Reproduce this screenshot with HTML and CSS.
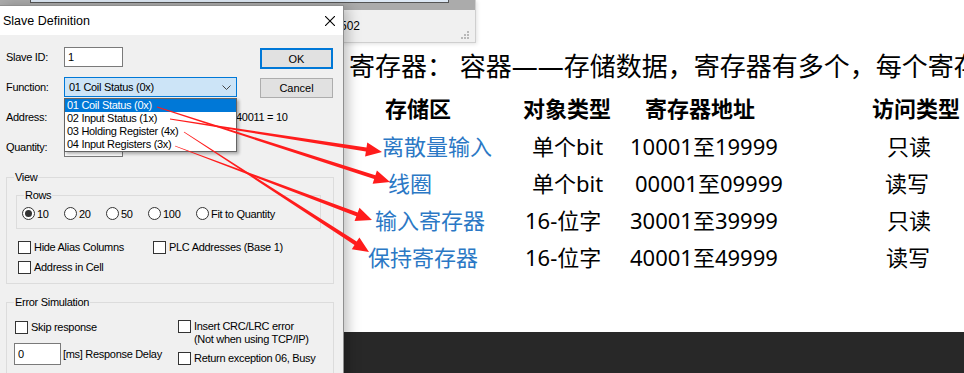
FILE: index.html
```html
<!DOCTYPE html>
<html>
    <head>
        <title>Slave Definition</title>
        <meta charset="utf-8" />
        <link rel="stylesheet" href="styles.css">
    </head>
    <body>
        <!-- window behind the dialog -->
        <div class="back-win">
            <div class="back-frame"><div class="back-client"></div></div>
            <div class="back-status">
                <span class="port">502</span>
                <svg class="grip" width="9" height="9" viewBox="0 0 9 9">
                    <rect x="7" y="1" width="2" height="2" />
                    <rect x="4" y="4" width="2" height="2" />
                    <rect x="7" y="4" width="2" height="2" />
                    <rect x="1" y="7" width="2" height="2" />
                    <rect x="4" y="7" width="2" height="2" />
                    <rect x="7" y="7" width="2" height="2" />
                </svg>
            </div>
        </div>

        <div class="dialog">
            <div class="titlebar">
                <span>Slave Definition</span>
                <svg width="10" height="10" viewBox="0 0 10 10">
                    <path d="M0 0 L10 10 M10 0 L0 10" stroke="#000" stroke-width="1.1" fill="none" />
                </svg>
            </div>
            <div class="dlg-body">
                <div class="top">
                    <div class="fields">
                        <div class="field"><label>Slave ID:</label><div class="edit">1</div></div>
                        <div class="field">
                            <label>Function:</label>
                            <div class="combo">
                                <span>01 Coil Status (0x)</span>
                                <svg width="9" height="5" viewBox="0 0 9 5">
                                    <path d="M0.5 0.5 L4.5 4.5 L8.5 0.5" stroke="#444" fill="none" />
                                </svg>
                            </div>
                        </div>
                        <div class="field"><label>Address:</label><div class="edit">0</div><span class="hint">40011 = 10</span></div>
                        <div class="field"><label>Quantity:</label><div class="edit">10</div></div>
                        <ul class="droplist">
                            <li class="sel">01 Coil Status (0x)</li>
                            <li>02 Input Status (1x)</li>
                            <li>03 Holding Register (4x)</li>
                            <li>04 Input Registers (3x)</li>
                        </ul>
                    </div>
                    <div class="buttons">
                        <button class="btn default">OK</button>
                        <button class="btn">Cancel</button>
                    </div>
                </div>

                <fieldset class="group view">
                    <legend>View</legend>
                    <fieldset class="group rows">
                        <legend>Rows</legend>
                        <div class="radios">
                            <span class="radio on"><i></i>10</span>
                            <span class="radio"><i></i>20</span>
                            <span class="radio"><i></i>50</span>
                            <span class="radio wide"><i></i>100</span>
                            <span class="radio fit"><i></i>Fit to Quantity</span>
                        </div>
                    </fieldset>
                    <div class="checks">
                        <span class="check"><i></i>Hide Alias Columns</span>
                        <span class="check"><i></i>PLC Addresses (Base 1)</span>
                        <span class="check"><i></i>Address in Cell</span>
                    </div>
                </fieldset>

                <fieldset class="group errors">
                    <legend>Error Simulation</legend>
                    <div class="err-cols">
                        <div class="err-left">
                            <span class="check"><i></i>Skip response</span>
                            <div class="delay"><div class="edit delay-edit">0</div><span>[ms] Response Delay</span></div>
                        </div>
                        <div class="err-right">
                            <span class="check multi"><i></i><span>Insert CRC/LRC error<br>(Not when using TCP/IP)</span></span>
                            <span class="check busy"><i></i>Return exception 06, Busy</span>
                        </div>
                    </div>
                </fieldset>
            </div>
        </div>

        <div class="doc">
            <div class="doc-main">
                <p class="lead">寄存器： 容器——存储数据，寄存器有多个，每个寄存器都有地址</p>
                <div class="regs">
                    <span class="head i17">存储区</span>
                    <span class="head">对象类型</span>
                    <span class="head i15">寄存器地址</span>
                    <span class="head">访问类型</span>

                    <span class="name i14">离散量输入</span>
                    <span class="i9">单个bit</span>
                    <span>10001至19999</span>
                    <span class="i15">只读</span>

                    <span class="name i20">线圈</span>
                    <span class="i9">单个bit</span>
                    <span class="i5">00001至09999</span>
                    <span class="i13">读写</span>

                    <span class="name i7">输入寄存器</span>
                    <span class="i2">16-位字</span>
                    <span>30001至39999</span>
                    <span class="i15">只读</span>

                    <span class="name">保持寄存器</span>
                    <span class="i2">16-位字</span>
                    <span>40001至49999</span>
                    <span class="i14">读写</span>
                </div>
            </div>
            <div class="doc-foot"></div>
        </div>

        <svg class="arrows" width="964" height="373" viewBox="0 0 964 373">
            <polygon points="157.12,106.62 375.38,175.20 376.91,170.44 390,182 372.63,183.76 374.16,179.00 156.88,107.38" />
            <polygon points="170.06,118.60 366.50,147.56 367.27,142.62 382,152 365.11,156.46 365.88,151.52 169.94,119.40" />
            <polygon points="184.22,131.66 356.67,241.61 359.39,237.42 369,252 351.77,249.16 354.49,244.97 183.78,132.34" />
            <polygon points="175.14,145.63 357.72,212.50 359.48,207.82 372,220 354.56,220.92 356.32,216.24 174.86,146.37" />
        </svg>
    </body>
</html>
```

FILE: styles.css
```css
html, body {
    margin: 0;
    padding: 0;
}
body {
    position: relative;
    display: flex;
    height: 373px;
    overflow: hidden;
    background: #fff;
    font-family: "Liberation Sans", Arial, sans-serif;
}

/* window behind */
.back-win {
    position: absolute;
    left: 0;
    top: 0;
    width: 475px;
    height: 42px;
    display: flex;
    flex-direction: column;
    background: #f0f0f0;
    border-right: 1px solid #cfcfcf;
    border-bottom: 1px solid #cfcfcf;
    box-shadow: 1px 1px 4px rgba(0, 0, 0, 0.12);
    z-index: 1;
}
.back-frame {
    height: 10px;
    background: #ababab;
    padding: 0 26px 0 30px;
}
.back-client {
    height: 2px;
    background: #dde8f4;
    border-right: 1px solid #555;
    border-bottom: 1px solid #555;
    border-left: 1px solid #555;
}
.back-status {
    flex: 1;
    display: flex;
    align-items: center;
    justify-content: space-between;
    padding: 0 6px 0 340px;
    font-size: 12px;
    color: #000;
}
.grip {
    align-self: flex-end;
    margin-bottom: 3px;
    fill: #b8b8b8;
}

/* dialog */
.dialog {
    position: relative;
    z-index: 2;
    box-sizing: border-box;
    flex: none;
    width: 344px;
    min-width: 0;
    height: 400px;
    margin-top: 5px;
    background: #f0f0f0;
    border: 1px solid #8f8f8f;
    border-left: none;
    box-shadow: 4px 2px 12px rgba(0, 0, 0, 0.25);
    color: #000;
    font-size: 11px;
    letter-spacing: -0.3px;
}
.titlebar {
    display: flex;
    justify-content: space-between;
    align-items: center;
    height: 29px;
    padding: 0 8px 0 3px;
    background: #fff;
    font-size: 12.5px;
    letter-spacing: 0;
}
.dlg-body {
    padding: 12px 9px 0 6px;
}
.top {
    display: flex;
}
.fields {
    position: relative;
    flex: 1;
    min-width: 0;
    display: flex;
    flex-direction: column;
    gap: 10px;
}
.field {
    display: flex;
    align-items: center;
    height: 20px;
    white-space: nowrap;
}
.field label {
    flex: none;
    width: 58px;
}
.edit {
    box-sizing: border-box;
    flex: none;
    width: 59px;
    height: 20px;
    padding-left: 3px;
    line-height: 18px;
    background: #fff;
    border: 1px solid #7a7a7a;
}
.hint {
    flex: none;
    margin-left: 113px;
}
.combo {
    box-sizing: border-box;
    flex: none;
    display: flex;
    justify-content: space-between;
    align-items: center;
    width: 173px;
    height: 20px;
    padding: 0 5px 0 4px;
    background: #cce4f7;
    border: 1px solid #0078d7;
}
.droplist {
    position: absolute;
    left: 58px;
    top: 51px;
    box-sizing: border-box;
    width: 173px;
    margin: 0;
    padding: 0;
    list-style: none;
    background: #fff;
    border: 1px solid #646464;
    box-shadow: 2px 2px 3px rgba(0, 0, 0, 0.3);
    white-space: nowrap;
}
.droplist li {
    height: 13px;
    line-height: 13px;
    padding-left: 2px;
}
.droplist .sel {
    background: #0078d7;
    color: #fff;
}
.buttons {
    flex: none;
    display: flex;
    flex-direction: column;
    width: 73px;
    margin-right: 1px;
    padding-top: 1px;
}
.btn {
    box-sizing: border-box;
    height: 20px;
    margin: 0;
    padding: 0;
    background: #e1e1e1;
    border: 1px solid #adadad;
    font: inherit;
    color: #000;
}
.btn.default {
    height: 21px;
    margin-bottom: 9px;
    border: 2px solid #0078d7;
}

/* group boxes */
.group {
    margin: 14px 0 0;
    padding: 5px 12px 9px 7px;
    border: 1px solid #dcdcdc;
    min-width: 0;
}
.group legend {
    padding: 0 1px;
    line-height: 13px;
}
.rows {
    margin: 0 0 0 2px;
    padding: 4px 8px 7px 5px;
}
.rows legend {
    margin-left: 2px;
}
.radios {
    display: flex;
    height: 15px;
    align-items: center;
    white-space: nowrap;
}
.radio {
    flex: none;
    display: flex;
    align-items: center;
    width: 42px;
}
.radio.wide {
    width: 48px;
}
.radio.fit {
    width: auto;
}
.radio i {
    box-sizing: border-box;
    display: flex;
    align-items: center;
    justify-content: center;
    width: 13px;
    height: 13px;
    margin-right: 2px;
    background: #fff;
    border: 1px solid #333;
    border-radius: 50%;
}
.radio.on i::after {
    content: "";
    width: 7px;
    height: 7px;
    border-radius: 50%;
    background: #333;
}
.check {
    display: flex;
    align-items: center;
    height: 14px;
    white-space: nowrap;
}
.check i {
    box-sizing: border-box;
    flex: 0 0 13px;
    height: 13px;
    margin-right: 3px;
    background: #fff;
    border: 1px solid #333;
}
.checks {
    display: grid;
    grid-template-columns: 135px auto;
    row-gap: 6px;
    margin: 11px 0 0 4px;
}
.errors {
    margin-top: 12px;
}
.err-cols {
    display: flex;
    padding-top: 6px;
}
.err-left {
    flex: none;
    width: 163px;
    padding-left: 1px;
}
.delay {
    display: flex;
    align-items: center;
    margin: 9px 0 0 -1px;
    white-space: nowrap;
}
.delay-edit {
    width: 47px;
    height: 22px;
    line-height: 20px;
    margin-right: 2px;
}
.check.multi {
    align-items: flex-start;
    height: auto;
    line-height: 13px;
}
.check.busy {
    margin-top: 5px;
}

/* document */
.doc {
    flex: 1;
    display: flex;
    flex-direction: column;
    min-width: 0;
    overflow: hidden;
    font-family: "Noto Sans", "Noto Sans CJK SC", sans-serif;
    color: #000;
}
.doc-main {
    flex: 1;
    padding: 51px 0 0 5px;
}
.lead {
    margin: 0;
    font-size: 26px;
    line-height: 30px;
    white-space: nowrap;
}
.regs {
    display: grid;
    grid-template-columns: 155px 107px 242px auto;
    grid-template-rows: 38px repeat(4, 37px);
    margin: 7px 0 0 19px;
    font-size: 22px;
    white-space: nowrap;
}
.regs span {
    display: flex;
    align-items: center;
}
.regs .head {
    font-weight: 700;
}
.regs .name {
    color: #2b78c5;
}
.i2 { padding-left: 2px; }
.i5 { padding-left: 5px; }
.i7 { padding-left: 7px; }
.i9 { padding-left: 9px; }
.i13 { padding-left: 13px; }
.i14 { padding-left: 14px; }
.i15 { padding-left: 15px; }
.i17 { padding-left: 17px; }
.i20 { padding-left: 20px; }
.doc-foot {
    height: 41px;
    background: #282828;
}

.arrows {
    position: absolute;
    left: 0;
    top: 0;
    z-index: 3;
    fill: #ff1c1c;
    pointer-events: none;
}
```
